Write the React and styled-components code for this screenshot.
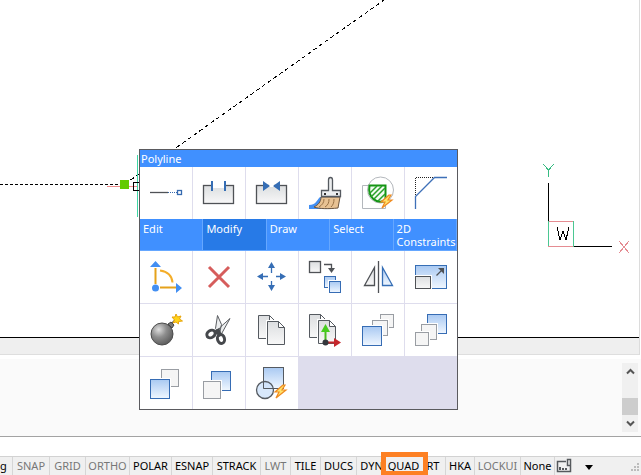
import React from "react";
import styled, { createGlobalStyle, css } from "styled-components";

const GlobalStyle = createGlobalStyle`
  *, *::before, *::after { box-sizing: border-box; }
  body { margin: 0; background: #fff; overflow: hidden; }
  body, button { font-family: "Noto Sans", "Open Sans", sans-serif; font-size: 11px; }
`;

const Page = styled.div`
  position: relative;
  display: flex;
  flex-direction: column;
  height: 100vh;
`;

const Workspace = styled.main`
  flex: 1;
  min-height: 0;
  display: flex;
  flex-direction: column;
  margin-right: 1px;
  border-right: 1px solid #dcdcdc;
`;

const Canvas = styled.div`
  position: relative;
  flex: 1;
  min-height: 0;
  overflow: hidden;
  background: #fff;
  border-bottom: 1px solid #000;
`;

const Drawing = styled.svg`
  position: absolute;
  left: 0;
  top: 0;
`;

const AxisMarker = styled.svg`
  position: absolute;
  right: 6px;
  top: 160px;
  overflow: visible;
`;

const CanvasFooter = styled.div`
  height: 17px;
  background: #efefef;
  border-bottom: 1px solid #dedede;
`;

const CommandLog = styled.section`
  display: flex;
  justify-content: flex-end;
  height: 78px;
  margin-top: 4px;
  padding: 4px 3px 4px 0;
  background: #fafafa;
  border-bottom: 1px solid #a3a3a3;
`;

const ScrollBar = styled.div`
  display: flex;
  flex-direction: column;
  justify-content: space-between;
  align-items: stretch;
  width: 16px;
  background: #f0f0f0;
`;

const ScrollButton = styled.button`
  display: grid;
  place-items: center;
  height: 17px;
  padding: 0;
  border: 0;
  background: transparent;
`;

const ScrollThumb = styled.div`
  height: 17px;
  margin-top: auto;
  background: #cdcdcd;
`;

const CommandInput = styled.input`
  height: 19px;
  padding: 0 4px;
  border: 0;
  outline: 0;
  background: #fff;
`;

const StatusBar = styled.footer`
  display: flex;
  height: 19px;
  background: #f0f0f0;
  border-top: 1px solid #d2d2d2;
`;

const StatusButton = styled.button`
  position: relative;
  flex: none;
  display: flex;
  align-items: center;
  justify-content: ${(p) => p.$align || "center"};
  width: ${(p) => p.$width}px;
  height: 18px;
  padding: 0;
  border: 0;
  border-right: 1px solid ${(p) => (p.$plain ? "transparent" : "#d6d6d6")};
  background: transparent;
  color: ${(p) => (p.$off ? "#777" : "#000")};
  line-height: 16px;
  white-space: nowrap;
  ${(p) =>
    p.$highlight &&
    css`
      z-index: 1;
      &::after {
        content: "";
        position: absolute;
        inset: -5px -8px 0 -6px;
        border: 5px solid #fd8023;
        border-bottom-width: 4px;
      }
    `}
`;

const Grip = styled.svg`
  margin: auto 0 0 auto;
`;

const Popup = styled.div`
  position: absolute;
  left: 139px;
  top: 149px;
  width: 319px;
  border: 1px solid #5a5a5e;
  background: #dedded;
  color: #fff;
`;

const Title = styled.div`
  height: 17px;
  padding-left: 1px;
  line-height: 18px;
  background: #4090ff;
`;

const ToolGrid = styled.div`
  display: grid;
  grid-template-columns: repeat(6, 1fr);
  grid-auto-rows: 52px;
  gap: 1px;
`;

const ToolButton = styled.button`
  display: grid;
  place-items: center;
  padding: 0;
  border: 0;
  background: #fff;
`;

const Tabs = styled.div`
  display: grid;
  grid-template-columns: repeat(5, 1fr);
  height: 32px;
`;

const Tab = styled.button`
  display: flex;
  align-items: flex-start;
  padding: 3px 0 0 3px;
  border: 0;
  border-right: 1px solid #65a7ff;
  border-bottom: 1px solid #65a7ff;
  background: ${(p) => (p.$active ? "#277ae7" : "#4090ff")};
  color: #fff;
  line-height: 13px;
  text-align: left;
`;

const Icon = ({ children }) => (
  <svg width="40" height="40" viewBox="0 0 40 40" fill="none" aria-hidden="true">
    {children}
  </svg>
);

const grads = (id) => (
  <defs>
    <linearGradient id={`${id}b`} x1="0" y1="0" x2="0" y2="1">
      <stop offset="0" stopColor="#a9c9f2" />
      <stop offset="1" stopColor="#f0f7ff" />
    </linearGradient>
    <linearGradient id={`${id}g`} x1="0" y1="0" x2="0" y2="1">
      <stop offset="0" stopColor="#dcdee0" />
      <stop offset="1" stopColor="#f8f8f8" />
    </linearGradient>
  </defs>
);

const Bolt = () => (
  <path d="M31 22l-8 7h4l-3 6 10-8h-4l3-5z" fill="#ffe36b" stroke="#ef8b21" strokeWidth="1.200" />
);

const Sheet = ({ x, y, id }) => (
  <g transform={`translate(${x} ${y})`}>
    <path d="M.5.500h11l6 6v17H.5z" fill={`url(#${id}g)`} stroke="#555a60" />
    <path d="M11.500.500v6h6z" fill="#fff" stroke="#555a60" />
  </g>
);

const quickTools = [
  ["Lengthen", <Icon><path d="M4 19.500h18" stroke="#4f5256" strokeWidth="1.300" /><path d="M22 19.500h9" stroke="#366ab0" strokeDasharray="1 1" /><rect x="31.500" y="17.500" width="4" height="4" stroke="#366ab0" strokeWidth="1.300" /></Icon>],
  ["Break", <Icon>{grads("br")}<rect x="4.500" y="12.500" width="30" height="18" fill="url(#brg)" stroke="#4f5256" strokeWidth="1.300" /><path d="M14 10h11v5H14z" fill="#fff" /><path d="M13 8v10M26 8v10" stroke="#366eb5" strokeWidth="2" /></Icon>],
  ["Join", <Icon>{grads("jo")}<rect x="4.500" y="12.500" width="30" height="18" fill="url(#jog)" stroke="#4f5256" strokeWidth="1.300" /><path d="M17 11h5v3h-5z" fill="#fff" /><path d="M11 8v10l7-5zM28 8v10l-7-5z" fill="#366eb5" /></Icon>],
  ["Match Properties", <Icon><path d="M4 36V32c7 0 7-4 11-8l8 2 5 10z" fill="#438ff2" /><path d="M16 24c0 5-3 8-7 10 5 2 15 2 24 1l2-11z" fill="#e8c293" stroke="#6c553e" /><path d="M19 26c0 4-2 6-5 8M24 26c0 4-1 6-4 8M29 26c0 4-1 6-3 8" stroke="#987145" /><path d="M23.500 17.500V7q0-2.500 2-2.500t2 2.500v10.500h8v6h-19v-6z" fill="#eceeef" stroke="#555a60" strokeWidth="1.300" /><path d="M19 20h2v2h-2zM31 20h2v2h-2z" fill="#333" /></Icon>],
  ["Hatch", <Icon><circle cx="22.500" cy="17" r="13" stroke="#b3b7bc" /><path d="M13 12.500H4.500v23h23v-7" stroke="#b3b7bc" /><path d="M11.500 12.500h16v15c-9 4-18-3-16-15z" fill="#f2fbf2" stroke="#149414" strokeWidth="2" /><path d="M11 21l8-8M13 24l11-11M16 26l11-11M20 28l7-7" stroke="#27a227" strokeWidth="1.500" /><Bolt /></Icon>],
  ["Chamfer", <Icon><path d="M4.500 24V4.500H24" stroke="#222" strokeDasharray="1 1" /><path d="M4.500 36V23.500L23.500 4.500H36" stroke="#3e70b8" strokeWidth="1.300" /></Icon>],
];

const Square = ({ x, y, s, blue, id }) => (
  <g>
    <rect x={x - 1} y={y - 1} width={s + 3} height={s + 3} fill="#fff" />
    <rect x={x + 0.5} y={y + 0.5} width={s} height={s} fill={blue ? `url(#${id}b)` : "#f5f5f5"} stroke={blue ? "#366cb4" : "#999da3"} />
  </g>
);

const modifyTools = [
  ["Manipulate", <Icon><path d="M9.500 11v16M14 30.500h17" stroke="#e5a21b" strokeWidth="2" /><path d="M14 13.500c7 1 12 5 12.500 12" stroke="#f4ad28" strokeWidth="2" /><path d="M4 10l5.500-6L15 10zM30 26v10l6-5z" fill="#438ff2" /><circle cx="9.500" cy="31" r="3.500" fill="#438ff2" /></Icon>],
  ["Erase", <Icon><path d="M10 10l20 20M30 10L10 30" stroke="#d65d5c" strokeWidth="3" /></Icon>],
  ["Move", <Icon><path d="M19.500 8v8M19.500 24v7M8 19.500h8M24 19.500h7" stroke="#366eb5" strokeWidth="1.300" /><path d="M16 11l3.500-6 3.500 6zM16 28l3.500 6 3.500-6zM11 16v7l-6-3.500zM28 16v7l6-3.500z" fill="#366eb5" /></Icon>],
  ["Copy", <Icon>{grads("cp")}<rect x="4.500" y="4.500" width="11" height="11" fill="url(#cpg)" stroke="#4f5256" strokeWidth="1.300" /><path d="M19 7.500h7.500V12" stroke="#4f5256" strokeWidth="1.300" /><path d="M23 11h7l-3.500 5z" fill="#4f5256" /><Square x={19} y={19} s={11} blue id="cp" /><Square x={24} y={24} s={11} blue id="cp" /></Icon>],
  ["Mirror", <Icon>{grads("mi")}<path d="M20.500 4v32" stroke="#4f5256" strokeWidth="1.300" /><path d="M16.500 10.500v18H6.500z" fill="url(#mig)" stroke="#4f5256" strokeWidth="1.300" /><path d="M24.500 10.500v18h10z" fill="url(#mib)" stroke="#366eb5" strokeWidth="1.300" /></Icon>],
  ["Scale", <Icon>{grads("sc")}<rect x="4.500" y="8.500" width="31" height="23" fill="url(#scb)" stroke="#366eb5" /><path d="M3 18h18v15H3z" fill="#fff" /><rect x="4.500" y="19.500" width="15" height="12" fill="url(#scg)" stroke="#4f5256" /><path d="M25.500 18.500l6-6" stroke="#4f5256" strokeWidth="1.300" /><path d="M27 11h6v6z" fill="#4f5256" /></Icon>],
  ["Explode", <Icon><defs><radialGradient id="bomb" cx=".35" cy=".3" r=".7"><stop offset="0" stopColor="#dedede" /><stop offset=".5" stopColor="#8e8e8e" /><stop offset="1" stopColor="#606060" /></radialGradient></defs><circle cx="16" cy="24" r="11" fill="url(#bomb)" stroke="#4c4c4c" /><path d="M22 14l3-2 3 3-2 3z" fill="#777" stroke="#444" /><path d="M26 13l4-4" stroke="#555" strokeWidth="1.500" /><path d="M30 4l1.500 3L35 6l-1.500 3 3 2-4 .5V14l-2.500-2-3 1 1.500-3L26 7h3z" fill="#ffd419" stroke="#e8a50d" /></Icon>],
  ["Trim", <Icon><path d="M18.500 5.500l-2 13 4 5 2-9zM31 8.500l-9 8-5 7 4 3z" fill="#eceeef" stroke="#5a5d61" /><g stroke="#45484c" strokeWidth="3"><ellipse cx="12" cy="24" rx="4.500" ry="3.500" transform="rotate(-35 12 24)" /><ellipse cx="22" cy="29" rx="3.500" ry="4.500" transform="rotate(-15 22 29)" /></g><path d="M15 21l5-3 3 7-6-1z" fill="#45484c" /></Icon>],
  ["Paste", <Icon>{grads("pa")}<Sheet x={6} y={5} id="pa" /><path d="M14 10h14l7 7v19H14z" fill="#fff" /><Sheet x={15} y={11} id="pa" /></Icon>],
  ["Copy with Base Point", <Icon>{grads("cb")}<Sheet x={4} y={4} id="cb" /><path d="M12 9h13l7 7v18H12z" fill="#fff" /><Sheet x={13} y={10} id="cb" /><path d="M20.500 32V20" stroke="#48bd20" strokeWidth="2" /><path d="M16 22l4.500-8 4.500 8z" fill="#48cc20" /><path d="M20 32.500h10" stroke="#c5272c" strokeWidth="2" /><path d="M29 28v9l7-4.500z" fill="#c5272c" /><circle cx="20.500" cy="32.500" r="3" fill="#33373c" /></Icon>],
  ["Bring to Front", <Icon>{grads("bf")}<Square x={22} y={4} s={13} /><Square x={14} y={10} s={15} /><Square x={4} y={16} s={19} blue id="bf" /></Icon>],
  ["Send to Back", <Icon>{grads("sb")}<Square x={16} y={4} s={19} blue id="sb" /><Square x={10} y={14} s={15} /><Square x={4} y={22} s={13} /></Icon>],
  ["Bring Above Object", <Icon>{grads("ba")}<Square x={15} y={6} s={17} /><Square x={4} y={16} s={19} blue id="ba" /></Icon>],
  ["Send Under Object", <Icon>{grads("su")}<Square x={12} y={8} s={19} blue id="su" /><Square x={4} y={18} s={17} /></Icon>],
  ["Quick Select", <Icon>{grads("qs")}<rect x="11.500" y="4.500" width="20" height="21" fill="url(#qsb)" stroke="#555a60" /><circle cx="13" cy="27" r="8.500" fill="#cbe0fa" fillOpacity=".75" stroke="#555a60" strokeWidth="1.300" /><path d="M11.500 18v7.500H22" stroke="#555a60" /><Bolt /></Icon>],
];

const tabs = ["Edit", "Modify", "Draw", "Select", "2D Constraints"];

const statusItems = [
  { label: "g", width: 13, align: "flex-start" },
  { label: "SNAP", width: 37, off: true },
  { label: "GRID", width: 36, off: true },
  { label: "ORTHO", width: 44, off: true },
  { label: "POLAR", width: 42 },
  { label: "ESNAP", width: 41 },
  { label: "STRACK", width: 48 },
  { label: "LWT", width: 30, off: true },
  { label: "TILE", width: 30 },
  { label: "DUCS", width: 36 },
  { label: "DYN", width: 30, align: "center", plain: true },
  { label: "QUAD", width: 34, highlight: true, plain: true },
  { label: "RT", width: 25 },
  { label: "HKA", width: 29 },
  { label: "LOCKUI", width: 46, off: true },
  { label: "None", width: 34 },
];

const ToolSet = ({ items }) => (
  <ToolGrid>
    {items.map(([label, icon]) => (
      <ToolButton key={label} type="button" aria-label={label}>{icon}</ToolButton>
    ))}
  </ToolGrid>
);

export default function App() {
  return (
    <Page>
      <GlobalStyle />
      <Workspace>
        <Canvas>
          <Drawing width="400" height="240" fill="none" shapeRendering="crispEdges" aria-hidden="true">
            <path d="M0 184.500h120" stroke="#000" strokeDasharray="3 2" />
            <path d="M125 184L384 0" stroke="#000" strokeDasharray="4 3" />
            <path d="M107 186.500h30" stroke="#ee8d8d" />
            <path d="M137.500 155v62" stroke="#3dd6a4" />
            <rect x="133.500" y="182.500" width="8" height="8" stroke="#000" />
            <rect x="120" y="180" width="9" height="9" fill="#62cb00" />
          </Drawing>
          <AxisMarker width="86" height="92" fill="none" shapeRendering="crispEdges" role="img" aria-label="World axes">
            <path d="M1.500 23v64M1 86.500h64" stroke="#000" />
            <path d="M1 61.500h25M1 86.500h25" stroke="#e58c92" />
            <path d="M1.500 61v25M26.500 61v26" stroke="#4bc792" />
            <path d="M-4 4l5.500 6L7 4M1.500 10v7" stroke="#37bb82" />
            <path d="M72 81l10 12M82 81L72 93" stroke="#e58c92" />
            <path d="M10 67l3 13 3-9 3 9 3-13" stroke="#000" />
          </AxisMarker>
        </Canvas>
        <CanvasFooter />
      </Workspace>
      <CommandLog aria-label="Command history">
        <ScrollBar>
          <ScrollButton type="button" aria-label="Scroll up">
            <svg width="9" height="7" fill="none"><path d="M1 5.500l3.500-3.500L8 5.500" stroke="#555" strokeWidth="2" /></svg>
          </ScrollButton>
          <ScrollThumb />
          <ScrollButton type="button" aria-label="Scroll down">
            <svg width="9" height="7" fill="none"><path d="M1 1.500L4.500 5 8 1.500" stroke="#555" strokeWidth="2" /></svg>
          </ScrollButton>
        </ScrollBar>
      </CommandLog>
      <CommandInput aria-label="Command" />
      <StatusBar>
        {statusItems.map((s) => (
          <StatusButton key={s.label} type="button" $width={s.width} $off={s.off} $align={s.align} $highlight={s.highlight} $plain={s.plain}>
            {s.label}
          </StatusButton>
        ))}
        <StatusButton type="button" $width={18} $plain aria-label="Annotation scale">
          <svg width="16" height="16" fill="none"><path d="M10 3.500H1.500v10h13V10" stroke="#55595d" strokeWidth="1.500" /><path d="M14.500 10V1.500h-3v6h3" stroke="#55595d" strokeWidth="1.500" /><path d="M3 9h2v3H3zM6 10h2v2H6zM9 10h2v2H9z" fill="#55595d" /></svg>
        </StatusButton>
        <StatusButton type="button" $width={32} $plain aria-label="Status bar options">
          <svg width="8" height="8"><path d="M0 3h8L4 8z" fill="#000" /></svg>
        </StatusButton>
        <Grip width="10" height="12" fill="#bcbcbc" aria-hidden="true">
          <path d="M6 0h2v2H6zM3 3h2v2H3zM6 3h2v2H6zM0 6h2v2H0zM3 6h2v2H3zM6 6h2v2H6z" />
        </Grip>
      </StatusBar>
      <Popup role="dialog" aria-label="Polyline">
        <Title>Polyline</Title>
        <ToolSet items={quickTools} />
        <Tabs role="tablist">
          {tabs.map((t) => (
            <Tab key={t} type="button" role="tab" aria-selected={t === "Modify"} $active={t === "Modify"}>{t}</Tab>
          ))}
        </Tabs>
        <ToolSet items={modifyTools} />
      </Popup>
    </Page>
  );
}
